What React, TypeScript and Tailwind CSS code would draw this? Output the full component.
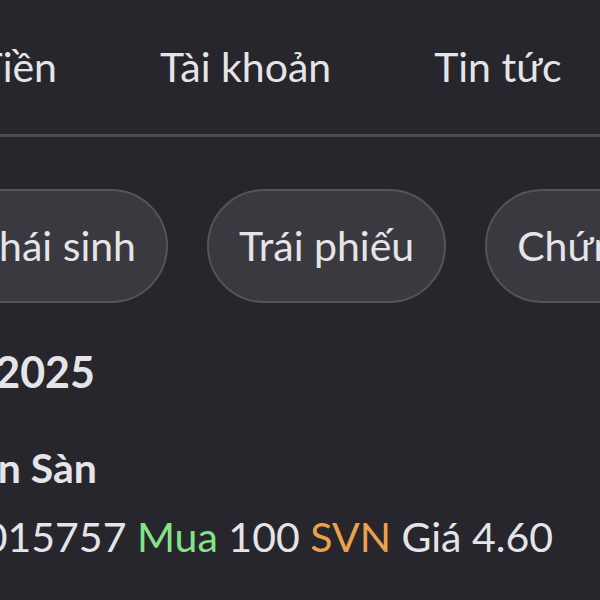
const tabs = ["Tài khoản", "Tin tức", "Tiện ích"];
const pills = ["Trái phiếu", "Chứng quyền"];

export default function App() {
  return (
    <div className="h-[600px] w-[600px] overflow-hidden bg-[#27262c] font-['Lato',sans-serif] text-[#e5e4e9]">
      <nav className="flex gap-[103px] whitespace-nowrap pt-[43px] text-[41px] leading-[48px]">
        <div className="flex w-[57px] shrink-0 justify-end">
          <span>Nạp Tiền</span>
        </div>
        {tabs.map((t) => (
          <span key={t} className="shrink-0">
            {t}
          </span>
        ))}
      </nav>

      <div className="mt-[43px] h-[3px] bg-[#4c4b51]" />

      <div className="mt-[52px] flex gap-[39px] whitespace-nowrap">
        <div className="flex w-[168px] shrink-0 justify-end">
          <span className="flex h-[114px] shrink-0 items-center rounded-full border-2 border-[#55545a] bg-[#3a393f] px-[30px] text-[41px]">
            Phái sinh
          </span>
        </div>
        {pills.map((p) => (
          <span
            key={p}
            className="flex h-[114px] shrink-0 items-center rounded-full border-2 border-[#55545a] bg-[#3a393f] px-[30px] text-[41px]"
          >
            {p}
          </span>
        ))}
      </div>

      <div className="mt-[43px] flex w-[95px] justify-end whitespace-nowrap text-[43px] font-bold leading-[52px]">
        <span>Thông báo 20/05/2025</span>
      </div>

      <div className="mt-[46px] flex w-[97px] justify-end whitespace-nowrap text-[41px] font-bold leading-[48px]">
        <span>Khớp lệnh trên Sàn</span>
      </div>

      <div className="mt-[21px] flex w-[553px] justify-end whitespace-nowrap text-[41px] leading-[48px]">
        <span>
          Lệnh 0015757 <span className="text-[#84e287]">Mua</span> 100{" "}
          <span className="text-[#eca24a]">SVN</span> Giá 4.60
        </span>
      </div>
    </div>
  );
}
